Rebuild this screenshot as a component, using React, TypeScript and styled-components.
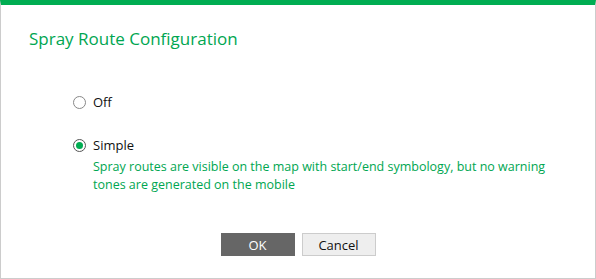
import React, { useState } from 'react';
import styled, { createGlobalStyle } from 'styled-components';

const GlobalStyle = createGlobalStyle`
    html, body {
        margin: 0;
        padding: 0;
        background: #ffffff;
    }
    body {
        font-family: "Open Sans", "Noto Sans", sans-serif;
    }
`

const Dialog = styled.div`
    box-sizing: border-box;
    width: 596px;
    height: 279px;
    border: 1px solid #cccccc;
    border-top: 5px solid #00ad52;
    display: flex;
    flex-direction: column;
    background: #ffffff;
`

const Title = styled.h2`
    margin: 0;
    padding: 23px 0 0 28px;
    font-size: 17px;
    font-weight: 400;
    line-height: 22px;
    color: #00a651;
`

const Options = styled.div`
    display: flex;
    flex-direction: column;
    gap: 21px;
    padding: 41px 0 0 72px;
`

const Option = styled.div`
    display: flex;
    flex-direction: column;
`

const OptionLabel = styled.label`
    display: flex;
    align-items: center;
    gap: 7px;
    font-size: 13px;
    line-height: 22px;
    color: #111111;
    cursor: pointer;
`

const Radio = styled.span<{ checked: boolean }>`
    box-sizing: border-box;
    width: 13px;
    height: 13px;
    border-radius: 50%;
    border: 1px solid ${p => (p.checked ? '#555555' : '#888888')};
    display: flex;
    align-items: center;
    justify-content: center;

    &::after {
        content: '';
        width: 7px;
        height: 7px;
        border-radius: 50%;
        background: ${p => (p.checked ? '#00ad52' : 'transparent')};
    }
`

const Hint = styled.p`
    margin: 2px 0 0;
    padding-left: 20px;
    width: 470px;
    font-size: 12.5px;
    line-height: 18px;
    color: #00a651;
`

const Footer = styled.div`
    margin-top: auto;
    display: flex;
    justify-content: center;
    gap: 7px;
    padding-bottom: 22px;
`

const Button = styled.button<{ primary?: boolean }>`
    box-sizing: border-box;
    width: 74px;
    height: 23px;
    font-family: "Open Sans", "Noto Sans", sans-serif;
    font-size: 13px;
    padding: 0;
    border: 1px solid ${p => (p.primary ? '#666666' : '#cccccc')};
    background: ${p => (p.primary ? '#666666' : '#eeeeee')};
    color: ${p => (p.primary ? '#ffffff' : '#111111')};
    cursor: pointer;
`

const options = [
    { id: 'off', label: 'Off', hint: '' },
    {
        id: 'simple',
        label: 'Simple',
        hint: 'Spray routes are visible on the map with start/end symbology, but no warning tones are generated on the mobile',
    },
]

const App: React.FC = () => {
    const [mode, setMode] = useState('simple')

    return (
        <>
            <GlobalStyle />
            <Dialog>
                <Title>Spray Route Configuration</Title>
                <Options>
                    {options.map(o => (
                        <Option key={o.id}>
                            <OptionLabel onClick={() => setMode(o.id)}>
                                <Radio checked={mode === o.id} />
                                {o.label}
                            </OptionLabel>
                            {mode === o.id && o.hint && <Hint>{o.hint}</Hint>}
                        </Option>
                    ))}
                </Options>
                <Footer>
                    <Button primary>OK</Button>
                    <Button>Cancel</Button>
                </Footer>
            </Dialog>
        </>
    )
}

export default App;
